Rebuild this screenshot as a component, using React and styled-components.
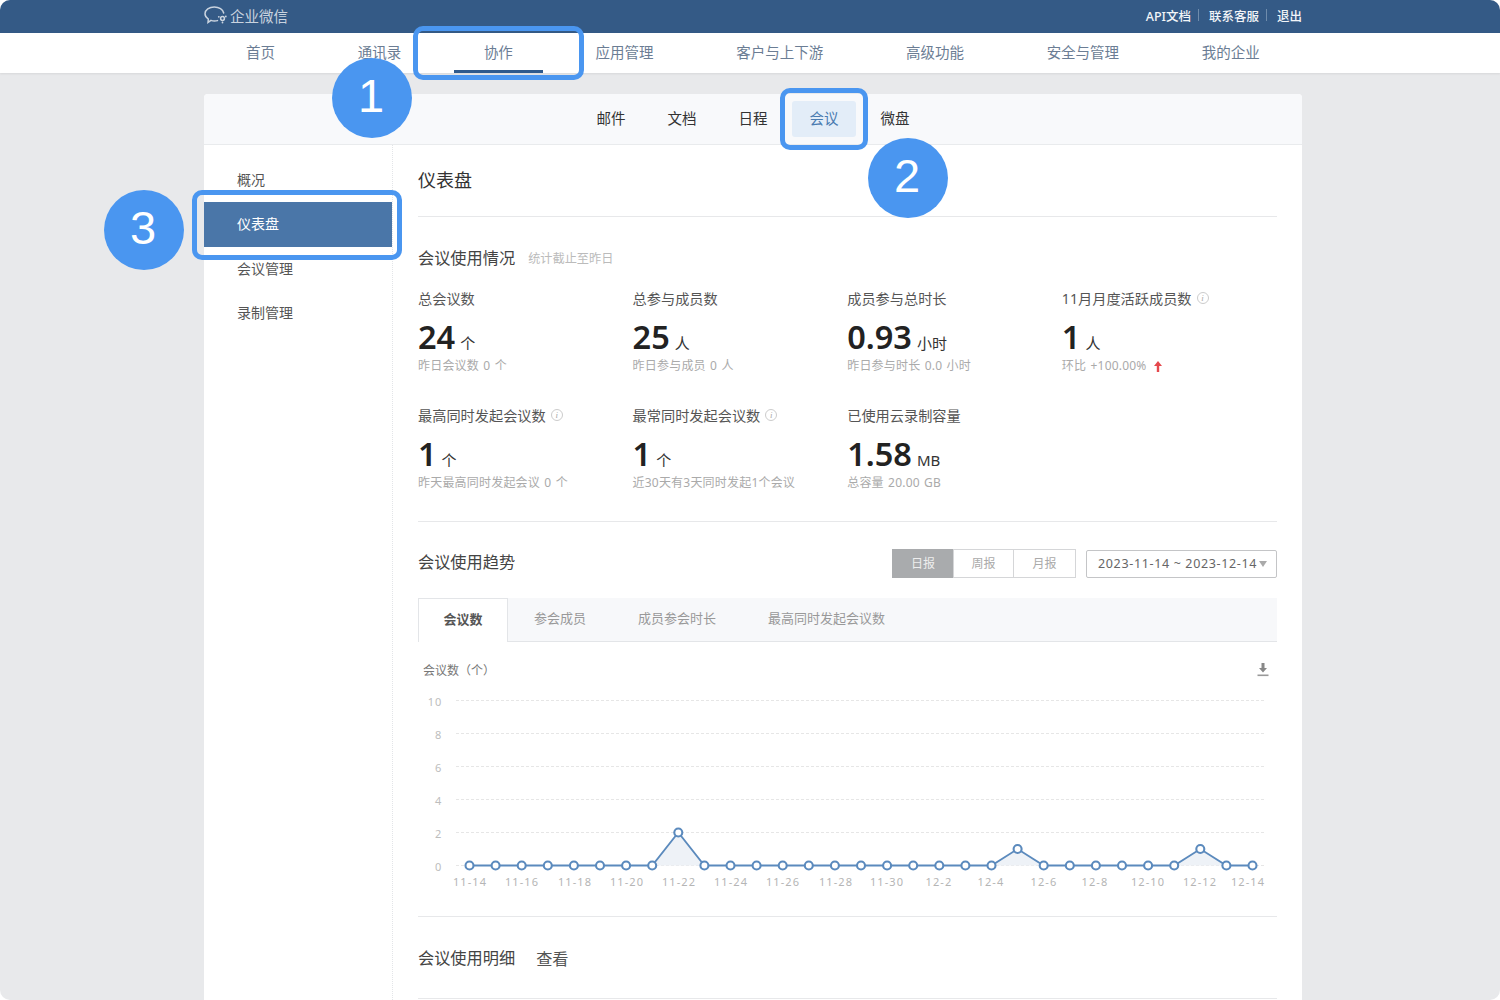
import React from "react";
import styled, { createGlobalStyle } from "styled-components";

const GlobalStyle = createGlobalStyle`
  html, body {
    margin: 0;
    padding: 0;
    height: 1000px;
    overflow: hidden;
    background: #fff;
    font-family: "Noto Sans", "Noto Sans CJK SC", sans-serif;
  }
  * { box-sizing: border-box; }
`;

const Page = styled.div`
  position: relative;
  width: 1500px;
  height: 1000px;
  overflow: hidden;
  border-radius: 10px;
  background: #e8e9eb;
`;

const TopBar = styled.div`
  height: 33px;
  background: #345a86;
  padding: 0 198px 3px 204px;
  display: flex;
  align-items: center;
  justify-content: space-between;
`;

const Brand = styled.div`
  display: flex;
  align-items: center;
  gap: 3px;
  color: #c9d3df;
  font-size: 14.5px;
`;

const TopLinks = styled.div`
  display: flex;
  align-items: center;
  color: #f2f5f8;
  font-size: 12.5px;
  font-weight: 500;
`;

const TopSep = styled.span`
  width: 1px;
  height: 12px;
  background: #6f8cac;
  margin: 0 9.5px 0 7.5px;
`;

const NavBar = styled.nav`
  height: 40px;
  background: #fff;
  padding-left: 246px;
  display: flex;
  gap: 82.7px;
  box-shadow: 0 1px 2px rgba(0, 0, 0, 0.08);
`;

const NavItem = styled.a`
  position: relative;
  height: 40px;
  line-height: 39px;
  font-size: 14.5px;
  color: #6b7d94;

  ${(p) =>
    p.$active &&
    `&::after {
      content: "";
      position: absolute;
      left: -30px;
      right: -30px;
      bottom: 0;
      height: 3px;
      background: #2f5a8c;
    }`}
`;

const Card = styled.div`
  width: 1098px;
  margin: 21px 0 0 204px;
  height: 906px;
  background: #fff;
  border-radius: 4px 4px 0 0;
  overflow: hidden;
`;

const SubNav = styled.div`
  height: 51px;
  background: #f8f9fb;
  border-bottom: 1px solid #e9ebed;
  display: flex;
  justify-content: center;
  align-items: center;
  gap: 7px;
`;

const SubItem = styled.a`
  width: 64px;
  height: 36px;
  line-height: 34px;
  text-align: center;
  border-radius: 3px;
  font-size: 14.5px;
  color: ${(p) => (p.$active ? "#4a7bb0" : "#333")};
  background: ${(p) => (p.$active ? "#e3edf8" : "transparent")};
`;

const Body = styled.div`
  display: flex;
  height: 855px;
`;

const Sidebar = styled.aside`
  width: 189px;
  flex: none;
  padding-top: 12.5px;
  border-right: 1px dotted #e3e5e8;
`;

const SideItem = styled.a`
  display: block;
  height: 44.5px;
  line-height: 44.5px;
  padding-left: 33px;
  font-size: 14px;
  color: ${(p) => (p.$active ? "#fff" : "#555")};
  background: ${(p) => (p.$active ? "#4a76a8" : "transparent")};
`;

const Main = styled.main`
  flex: 1;
  padding: 0 25px;
`;

const PageTitle = styled.h1`
  margin: 0;
  height: 72px;
  line-height: 70px;
  font-size: 18px;
  font-weight: 400;
  color: #333;
  border-bottom: 1px solid #e7e8ea;
`;

const SectionHead = styled.div`
  display: flex;
  align-items: center;
  gap: 13px;
  margin-top: ${(p) => p.$top || 0}px;
`;

const SectionTitle = styled.h2`
  margin: 0;
  font-size: 16.2px;
  line-height: 24px;
  font-weight: 400;
  color: #444;
`;

const Hint = styled.span`
  font-size: 12.2px;
  color: #bbb;
`;

const StatGrid = styled.div`
  display: grid;
  grid-template-columns: repeat(4, 214.6px);
  grid-auto-rows: 116.5px;
  margin-top: 17px;
  height: 235px;
  border-bottom: 1px solid #e7e8ea;
`;

const Stat = styled.div`
  display: flex;
  flex-direction: column;
`;

const StatLabel = styled.div`
  display: flex;
  align-items: center;
  gap: 5px;
  height: 22px;
  font-size: 14.2px;
  color: #555;
`;

const StatValue = styled.div`
  display: flex;
  align-items: baseline;
  gap: 5px;
  height: 42px;
  margin-top: 7px;
  line-height: 42px;
  font-size: 32.5px;
  font-weight: 600;
  color: #222;
`;

const StatUnit = styled.span`
  font-size: 15px;
  font-weight: 400;
  color: #333;
`;

const StatSub = styled.div`
  display: flex;
  align-items: center;
  gap: 8px;
  margin-top: -1px;
  font-size: 12px;
  line-height: 18px;
  letter-spacing: 0.2px;
  word-spacing: 1px;
  color: #aaa;
`;

const InfoMark = styled.span`
  width: 12px;
  height: 12px;
  border: 1px solid #ccc;
  border-radius: 50%;
  font: italic 9px/10px "Liberation Serif", serif;
  text-align: center;
  color: #aaa;
`;

const TrendHead = styled.div`
  display: flex;
  align-items: center;
  margin-top: 25px;
  height: 30px;
`;

const Controls = styled.div`
  margin: 3px 0 0 auto;
  display: flex;
  align-items: center;
`;

const Segment = styled.a`
  width: ${(p) => p.$w}px;
  height: 29px;
  line-height: 27px;
  text-align: center;
  font-size: 12px;
  color: ${(p) => (p.$active ? "#eee" : "#aaa")};
  background: ${(p) => (p.$active ? "#a9abad" : "#fff")};
  border: 1px solid ${(p) => (p.$active ? "#a9abad" : "#d5d6d8")};
  margin-left: ${(p) => (p.$first ? 0 : "-1px")};
`;

const DateBox = styled.div`
  display: flex;
  align-items: center;
  justify-content: space-between;
  margin-left: 10px;
  width: 191px;
  height: 28px;
  padding: 0 9px 0 11px;
  border: 1px solid #c4c5c7;
  border-radius: 2px;
  font-size: 12.5px;
  letter-spacing: 0.65px;
  color: #666;
  white-space: nowrap;

  &::after {
    content: "";
    border: 4px solid transparent;
    border-top: 6px solid #aaa;
    border-bottom: 0;
  }
`;

const Tabs = styled.div`
  display: flex;
  height: 44px;
  margin-top: 21px;
  background: #f7f8fa;
  border-bottom: 1px solid #e3e5e8;
`;

const Tab = styled.a`
  padding: 0 ${(p) => (p.$active ? 24.5 : 26)}px;
  line-height: 41px;
  font-size: 13px;
  font-weight: ${(p) => (p.$active ? 700 : 400)};
  color: ${(p) => (p.$active ? "#555" : "#999")};
  ${(p) =>
    p.$active &&
    `background: #fff;
    height: 44px;
    border: 1px solid #e3e5e8;
    border-bottom: 0;`}
`;

const ChartHead = styled.div`
  display: flex;
  align-items: center;
  justify-content: space-between;
  height: 20px;
  margin-top: 18px;
  padding: 0 8px 0 5px;
  font-size: 12px;
  color: #777;
`;

const ChartSvg = styled.svg`
  display: block;
  margin-top: 10px;
`;

const Detail = styled.div`
  display: flex;
  align-items: center;
  gap: 21px;
  height: 83px;
  margin-top: 21px;
  border-top: 1px solid #e7e8ea;
  border-bottom: 1px solid #e7e8ea;
`;

const DetailLink = styled.a`
  font-size: 16.2px;
  color: #555;
`;

const Highlight = styled.div`
  position: absolute;
  left: ${(p) => p.$x}px;
  top: ${(p) => p.$y}px;
  width: ${(p) => p.$w}px;
  height: ${(p) => p.$h}px;
  border: 5px solid #4a96f0;
  border-radius: 10px;
`;

const Badge = styled.div`
  position: absolute;
  left: ${(p) => p.$x - 40}px;
  top: ${(p) => p.$y - 40}px;
  width: 80px;
  height: 80px;
  padding-right: 2px;
  border-radius: 50%;
  background: #4a96f0;
  color: #fff;
  font: 47px/76px "Liberation Sans", Arial, sans-serif;
  text-align: center;
`;

const navItems = ["首页", "通讯录", "协作", "应用管理", "客户与上下游", "高级功能", "安全与管理", "我的企业"];
const subItems = ["邮件", "文档", "日程", "会议", "微盘"];
const sideItems = ["概况", "仪表盘", "会议管理", "录制管理"];

const stats = [
  { label: "总会议数", value: "24", unit: "个", sub: "昨日会议数 0 个" },
  { label: "总参与成员数", value: "25", unit: "人", sub: "昨日参与成员 0 人" },
  { label: "成员参与总时长", value: "0.93", unit: "小时", sub: "昨日参与时长 0.0 小时" },
  { label: "11月月度活跃成员数", value: "1", unit: "人", sub: "环比 +100.00%", info: true, up: true },
  { label: "最高同时发起会议数", value: "1", unit: "个", sub: "昨天最高同时发起会议 0 个", info: true },
  { label: "最常同时发起会议数", value: "1", unit: "个", sub: "近30天有3天同时发起1个会议", info: true },
  { label: "已使用云录制容量", value: "1.58", unit: "MB", sub: "总容量 20.00 GB" },
];

const tabs = ["会议数", "参会成员", "成员参会时长", "最高同时发起会议数"];

// chart coordinates are relative to the svg, which starts at the left of the main column
const xLabels = [
  ["11-14", 52], ["11-16", 104], ["11-18", 157], ["11-20", 209], ["11-22", 261], ["11-24", 313],
  ["11-26", 365], ["11-28", 418], ["11-30", 469], ["12-2", 521], ["12-4", 573], ["12-6", 626],
  ["12-8", 677], ["12-10", 730], ["12-12", 782], ["12-14", 830],
];
const yTicks = [10, 8, 6, 4, 2, 0];
const values = Array.from({ length: 31 }, (_, i) => (i === 8 ? 2 : i === 21 || i === 28 ? 1 : 0));
const px = (i) => 51.5 + i * 26.1;
const py = (v) => 175.5 - v * 16.5;
const points = values.map((v, i) => `${px(i)},${py(v)}`).join(" ");

function Logo() {
  return (
    <svg width="23" height="18" viewBox="0 0 23 18" fill="none" stroke="#c9d3df" strokeWidth="1.5" strokeLinecap="round">
      <path d="M13.5 14.600c-1 .3-2 .4-3 .4-1.200 0-2.400-.2-3.500-.6L4 16.400l.3-3.400C2.200 11.600 1 9.700 1 7.800 1 3.900 5.200 1 10.300 1c4.700 0 8.700 2.500 9.400 6" />
      <circle cx="18.500" cy="12.500" r="1.900" />
      <circle cx="14.800" cy="10.800" r="0.900" fill="#c9d3df" stroke="none" />
      <circle cx="21.800" cy="10.500" r="0.900" fill="#c9d3df" stroke="none" />
      <circle cx="18.500" cy="16.500" r="0.900" fill="#c9d3df" stroke="none" />
    </svg>
  );
}

function UpArrow() {
  return (
    <svg width="8" height="11" viewBox="0 0 8 11">
      <path d="M4 0 8 5H5.200v6H2.800V5H0z" fill="#e5484d" />
    </svg>
  );
}

function DownloadIcon() {
  return (
    <svg width="12" height="14" viewBox="0 0 12 14">
      <path d="M4.500 0h3v5H10L6 9.500 2 5h2.500z" fill="#888" />
      <rect x="0.500" y="11.500" width="11" height="1.600" fill="#999" />
    </svg>
  );
}

function TrendChart() {
  return (
    <ChartSvg width="859" height="205" viewBox="0 0 859 205">
      {yTicks.map((t) => (
        <g key={t}>
          <line x1="38" x2="847" y1={py(t)} y2={py(t)} stroke="#e6e6e6" strokeDasharray="3 2" />
          <text x="24" y={py(t) + 5} textAnchor="end" fontSize="11" fill="#bdbdbd" letterSpacing="0.8">{t}</text>
        </g>
      ))}
      {xLabels.map(([t, x]) => (
        <text key={t} x={x} y="196" textAnchor="middle" fontSize="11" fill="#b5b5b5" letterSpacing="1.1">{t}</text>
      ))}
      <polygon points={`${px(0)},${py(0)} ${points} ${px(30)},${py(0)}`} fill="#eef2f7" />
      <polyline points={points} fill="none" stroke="#5b8abd" strokeWidth="1.8" />
      {values.map((v, i) => (
        <circle key={i} cx={px(i)} cy={py(v)} r="4" fill="#fff" stroke="#5b8abd" strokeWidth="2.1" />
      ))}
    </ChartSvg>
  );
}

export default function App() {
  return (
    <Page>
      <GlobalStyle />
      <TopBar>
        <Brand>
          <Logo />
          企业微信
        </Brand>
        <TopLinks>
          API文档<TopSep />联系客服<TopSep />退出
        </TopLinks>
      </TopBar>
      <NavBar>
        {navItems.map((n) => (
          <NavItem key={n} $active={n === "协作"}>{n}</NavItem>
        ))}
      </NavBar>
      <Card>
        <SubNav>
          {subItems.map((n) => (
            <SubItem key={n} $active={n === "会议"}>{n}</SubItem>
          ))}
        </SubNav>
        <Body>
          <Sidebar>
            {sideItems.map((n) => (
              <SideItem key={n} $active={n === "仪表盘"}>{n}</SideItem>
            ))}
          </Sidebar>
          <Main>
            <PageTitle>仪表盘</PageTitle>
            <SectionHead $top={29}>
              <SectionTitle>会议使用情况</SectionTitle>
              <Hint>统计截止至昨日</Hint>
            </SectionHead>
            <StatGrid>
              {stats.map((s) => (
                <Stat key={s.label}>
                  <StatLabel>
                    {s.label}
                    {s.info && <InfoMark>i</InfoMark>}
                  </StatLabel>
                  <StatValue>
                    {s.value}
                    <StatUnit>{s.unit}</StatUnit>
                  </StatValue>
                  <StatSub>
                    {s.sub}
                    {s.up && <UpArrow />}
                  </StatSub>
                </Stat>
              ))}
            </StatGrid>
            <TrendHead>
              <SectionTitle>会议使用趋势</SectionTitle>
              <Controls>
                <Segment $w={62} $first $active>日报</Segment>
                <Segment $w={61}>周报</Segment>
                <Segment $w={63}>月报</Segment>
                <DateBox>2023-11-14 ~ 2023-12-14</DateBox>
              </Controls>
            </TrendHead>
            <Tabs>
              {tabs.map((t, i) => (
                <Tab key={t} $active={i === 0}>{t}</Tab>
              ))}
            </Tabs>
            <ChartHead>
              会议数（个）
              <DownloadIcon />
            </ChartHead>
            <TrendChart />
            <Detail>
              <SectionTitle>会议使用明细</SectionTitle>
              <DetailLink>查看</DetailLink>
            </Detail>
          </Main>
        </Body>
      </Card>
      <Highlight $x={413} $y={26} $w={171} $h={54} />
      <Highlight $x={780} $y={88} $w={88} $h={62} />
      <Highlight $x={192} $y={190} $w={210} $h={70} />
      <Badge $x={372} $y={98}>1</Badge>
      <Badge $x={908} $y={178}>2</Badge>
      <Badge $x={144} $y={230}>3</Badge>
    </Page>
  );
}
